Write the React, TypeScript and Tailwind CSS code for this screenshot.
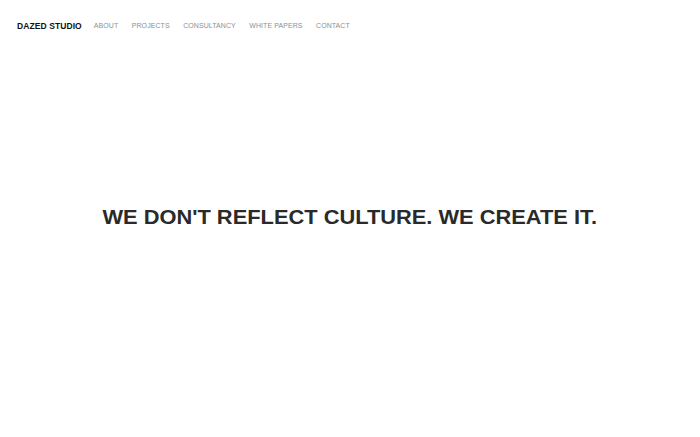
import React from 'react';

const NAV_ITEMS = ['ABOUT', 'PROJECTS', 'CONSULTANCY', 'WHITE PAPERS', 'CONTACT'];

export default function App() {
  return (
    <div className="flex h-[437px] w-full flex-col bg-white font-['Liberation_Sans',Arial,sans-serif]">
      {/* Header */}
      <header className="flex h-[50px] items-center px-[17px] pt-[2px]">
        <span className="mr-[12px] text-[8.5px] font-bold tracking-[0.01em] text-[#111]">
          DAZED STUDIO
        </span>
        <nav className="flex items-center gap-[13.5px]">
          {NAV_ITEMS.map((item) => (
            <a key={item} href="#" className="text-[7px] tracking-[0.01em] text-[#8f8f8f]">
              {item}
            </a>
          ))}
        </nav>
      </header>

      {/* Hero */}
      <main className="flex flex-1 items-center justify-center pb-[53px]">
        <h1 className="scale-x-[1.04] text-[21px] font-bold text-[#2a2a2a]">
          WE DON&apos;T REFLECT CULTURE. WE CREATE IT.
        </h1>
      </main>
    </div>
  );
}
